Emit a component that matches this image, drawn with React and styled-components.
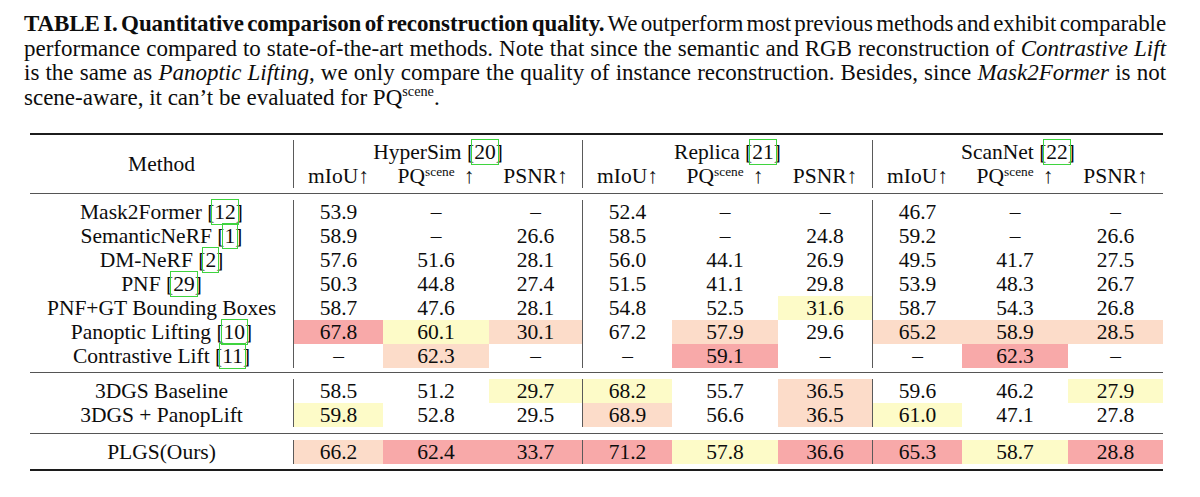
import React from 'react';
import styled, { createGlobalStyle } from 'styled-components';

const GlobalStyle = createGlobalStyle`
  html,
  body {
    margin: 0;
    background: #fff;
  }

  body {
    font-family: 'Liberation Serif', 'Times New Roman', serif;
    color: #0d0d0d;
  }
`;

// column widths: method + three datasets of (mIoU, PQ, PSNR)
const COLS = '263px 90px 106px 93px 90px 106px 94px 90px 106px 95px';

const TONES = {
  r: '#f8a9a9',
  y: '#fdfbc8',
  p: '#fcdcc9'
};

const Page = styled.main`
  width: 1200px;
  height: 497px;
  box-sizing: border-box;
  padding: 12px 34px 0 24px;
  overflow: hidden;
`;

const Caption = styled.div`
  font-size: 23px;
  line-height: 24.6px;

  b {
    font-weight: 700;
  }
`;

// every line but the last is stretched to the full measure, like the typeset original
const CaptionLine = styled.span`
  display: block;
  text-align: ${p => (p.$last ? 'left' : 'justify')};
  text-align-last: ${p => (p.$last ? 'left' : 'justify')};
  word-spacing: ${p => (p.$last ? '0' : p.$tight ? '-4.5px' : '-2px')};
  letter-spacing: ${p => (p.$tight ? '-0.1px' : '0')};
`;

const Sup = styled.sup`
  font-size: 0.62em;
  vertical-align: ${p => p.$raise || '0.6em'};
  line-height: 0;
`;

const Arrow = styled.span`
  margin-left: ${p => (p.$spaced ? '9px' : '0')};
`;

const Table = styled.div`
  width: 1133px;
  margin: 23px 0 0 6px;
  font-size: 21.5px;
  line-height: 24px;
`;

const Rule = styled.div`
  height: ${p => (p.$heavy ? 2 : 1)}px;
  background: ${p => (p.$heavy ? '#1c1c1c' : '#555')};
`;

const Block = styled.div`
  display: grid;
  grid-template-columns: ${COLS};
  grid-auto-rows: 24px;
  padding: ${p => p.$pad || '5px 0'};
`;

const Cell = styled.div`
  text-align: center;
  white-space: nowrap;
  line-height: ${p => (p.$tall ? '48px' : '24px')};
  background: ${p => TONES[p.$tone] || 'transparent'};
  border-left: ${p => (p.$edge ? '1px solid #5a5a5a' : '0')};
  grid-column: ${p => (p.$span ? `span ${p.$span}` : 'auto')};
  grid-row: ${p => (p.$tall ? 'span 2' : 'auto')};
`;

const CiteBox = styled.span`
  outline: 1px solid #3fd43f;
  padding: 0 2px;
  margin: 0 -2px;
`;

const Cite = ({ n }) => (
  <>
    {' '}[<CiteBox>{n}</CiteBox>]
  </>
);

const DATASETS = [
  { name: 'HyperSim', cite: 20 },
  { name: 'Replica', cite: 21 },
  { name: 'ScanNet', cite: 22 }
];

// "value:tone" where tone is r (best), p (second), y (third)
const SECTIONS = [
  {
    pad: '6px 0 4px',
    rows: [
      ['Mask2Former', 12, ['53.9', '–', '–', '52.4', '–', '–', '46.7', '–', '–']],
      ['SemanticNeRF', 1, ['58.9', '–', '26.6', '58.5', '–', '24.8', '59.2', '–', '26.6']],
      ['DM-NeRF', 2, ['57.6', '51.6', '28.1', '56.0', '44.1', '26.9', '49.5', '41.7', '27.5']],
      ['PNF', 29, ['50.3', '44.8', '27.4', '51.5', '41.1', '29.8', '53.9', '48.3', '26.7']],
      ['PNF+GT Bounding Boxes', null, ['58.7', '47.6', '28.1', '54.8', '52.5', '31.6:y', '58.7', '54.3', '26.8']],
      ['Panoptic Lifting', 10, ['67.8:r', '60.1:y', '30.1:p', '67.2', '57.9:p', '29.6', '65.2:p', '58.9:p', '28.5:p']],
      ['Contrastive Lift', 11, ['–', '62.3:p', '–', '–', '59.1:r', '–', '–', '62.3:r', '–']]
    ]
  },
  {
    pad: '6px 0',
    rows: [
      ['3DGS Baseline', null, ['58.5', '51.2', '29.7:y', '68.2:y', '55.7', '36.5:p', '59.6', '46.2', '27.9:y']],
      ['3DGS + PanopLift', null, ['59.8:y', '52.8', '29.5', '68.9:p', '56.6', '36.5:p', '61.0:y', '47.1', '27.8']]
    ]
  },
  {
    pad: '6px 0 5px',
    rows: [
      ['PLGS(Ours)', null, ['66.2:p', '62.4:r', '33.7:r', '71.2:r', '57.8:y', '36.6:r', '65.3:r', '58.7:y', '28.8:r']]
    ]
  }
];

const HeaderBlock = () => (
  <Block>
    <Cell $tall>Method</Cell>
    {DATASETS.map(d => (
      <Cell key={d.name} $span={3} $edge>
        {d.name}
        <Cite n={d.cite} />
      </Cell>
    ))}
    {DATASETS.map(d => (
      <React.Fragment key={d.name}>
        <Cell $edge>
          mIoU<Arrow>↑</Arrow>
        </Cell>
        <Cell>
          PQ<Sup $raise="0.55em">scene</Sup>
          <Arrow $spaced>↑</Arrow>
        </Cell>
        <Cell>
          PSNR<Arrow>↑</Arrow>
        </Cell>
      </React.Fragment>
    ))}
  </Block>
);

const DataBlock = ({ section }) => (
  <Block $pad={section.pad}>
    {section.rows.map(([name, cite, vals]) => (
      <React.Fragment key={name}>
        <Cell>
          {name}
          {cite && <Cite n={cite} />}
        </Cell>
        {vals.map((v, i) => {
          const [value, tone] = v.split(':');
          return (
            <Cell key={i} $tone={tone} $edge={i % 3 === 0}>
              {value}
            </Cell>
          );
        })}
      </React.Fragment>
    ))}
  </Block>
);

const App = () => (
  <Page>
    <GlobalStyle />
    <Caption>
      <CaptionLine $tight>
        <b>TABLE I. Quantitative comparison of reconstruction quality.</b> We outperform most previous methods and
        exhibit comparable
      </CaptionLine>
      <CaptionLine>
        performance compared to state-of-the-art methods. Note that since the semantic and RGB reconstruction of{' '}
        <i>Contrastive Lift</i>
      </CaptionLine>
      <CaptionLine>
        is the same as <i>Panoptic Lifting</i>, we only compare the quality of instance reconstruction. Besides, since{' '}
        <i>Mask2Former</i> is not
      </CaptionLine>
      <CaptionLine $last>
        scene-aware, it can’t be evaluated for PQ<Sup>scene</Sup>.
      </CaptionLine>
    </Caption>
    <Table>
      <Rule $heavy />
      <HeaderBlock />
      <Rule />
      <DataBlock section={SECTIONS[0]} />
      <Rule />
      <DataBlock section={SECTIONS[1]} />
      <Rule />
      <DataBlock section={SECTIONS[2]} />
      <Rule $heavy />
    </Table>
  </Page>
);

export default App;
